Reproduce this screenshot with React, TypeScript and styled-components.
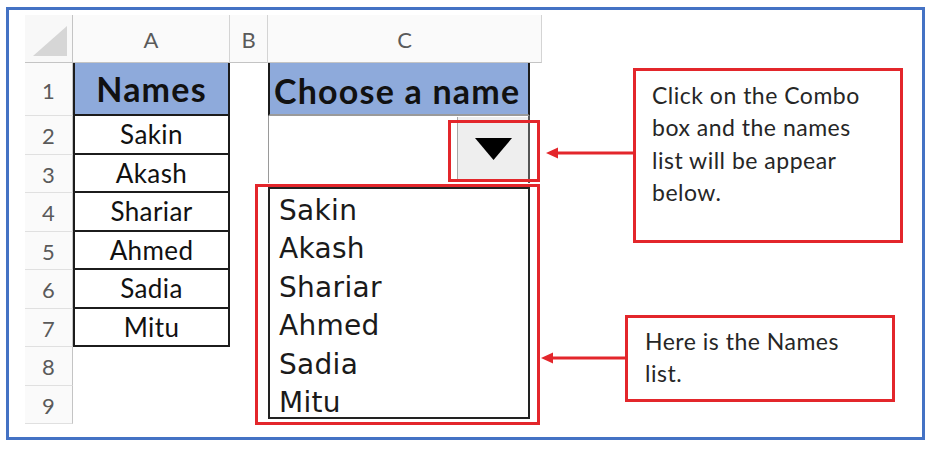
import React from 'react'
import styled, {createGlobalStyle} from 'styled-components'

const RED = '#e3262b'
const INK = '#1c1c1c'

const names = ['Sakin', 'Akash', 'Shariar', 'Ahmed', 'Sadia', 'Mitu']
const rowNumbers = [1, 2, 3, 4, 5, 6, 7, 8, 9]

const GlobalStyle = createGlobalStyle`
  body {
    margin: 0;
    background: #ffffff;
    font-family: Lato, 'Liberation Sans', sans-serif;
  }
`

type ArrowProps = {
  width: number
  top: number
}

// red callout arrow, tip on the left
const Arrow: React.FC<ArrowProps> = ({width, top}) => (
  <ArrowSvg width={width} height={14} viewBox={`0 0 ${width} 14`} style={{top}}>
    <line x1={9} y1={7} x2={width} y2={7} stroke={RED} strokeWidth={3} />
    <polygon points="0,7 12,1.5 12,12.5" fill={RED} />
  </ArrowSvg>
)

const App: React.FC = () => {
  return (
    <>
      <GlobalStyle />
      <Frame>
        <Sheet>
          <Corner>
            <svg width="34" height="30" viewBox="0 0 34 30">
              <polygon points="0,30 34,0 34,30" fill="#d6d6d6" />
            </svg>
          </Corner>
          <ColHeader $col={2}>A</ColHeader>
          <ColHeader $col={3}>B</ColHeader>
          <ColHeader $col={4}>C</ColHeader>

          {rowNumbers.map((n) => (
            <RowHeader key={n} $row={n + 1}>
              {n}
            </RowHeader>
          ))}

          <NameCell $row={2} $head>
            Names
          </NameCell>
          {names.map((name, i) => (
            <NameCell key={name} $row={i + 3}>
              {name}
            </NameCell>
          ))}

          <ChooseCell>Choose a name</ChooseCell>

          <ComboColumn>
            <ComboField>
              <DropButton>
                <svg width="37" height="22" viewBox="0 0 37 22">
                  <polygon points="0,0 37,0 18.5,22" fill="#000" />
                </svg>
                <Highlight $top={3} $left={-10} $right={-12} $bottom={-2} />
              </DropButton>
            </ComboField>
            <ListBox>
              {names.map((name) => (
                <ListItem key={name}>{name}</ListItem>
              ))}
              <Highlight $top={-5} $left={-15} $right={-12} $bottom={-8} />
            </ListBox>
          </ComboColumn>
        </Sheet>

        <Notes>
          <Callout $indent={91} $gap={53} $height={175} $padTop={8} $padLeft={16}>
            <Arrow width={90} top={75} />
            Click on the Combo box and the names list will be appear below.
          </Callout>
          <Callout $indent={83} $gap={72} $height={87} $padTop={7} $padLeft={17}>
            <Arrow width={87} top={33} />
            Here is the Names list.
          </Callout>
        </Notes>
      </Frame>
    </>
  )
}
export default App

const Frame = styled.div`
  box-sizing: border-box;
  width: 919px;
  height: 433px;
  margin: 7px 0 0 6px;
  border: 3px solid #4472c4;
  display: flex;
  align-items: flex-start;
  padding: 5px 0 0 16px;
`

const Sheet = styled.div`
  display: grid;
  grid-template-columns: 48px 157px 38px 274px;
  grid-template-rows: 48px 53px repeat(8, 38.5px);
  flex-shrink: 0;
`

const Corner = styled.div`
  grid-column: 1;
  grid-row: 1;
  display: flex;
  align-items: flex-end;
  justify-content: flex-end;
  padding: 0 5px 6px 0;
  background: #f8f8f8;
  border-right: 1px solid #c4c4c4;
  border-bottom: 1px solid #c4c4c4;
`

const ColHeader = styled.div<{$col: number}>`
  grid-column: ${(p) => p.$col};
  grid-row: 1;
  display: flex;
  align-items: center;
  justify-content: center;
  padding-top: 2px;
  background: #fafafa;
  border-right: 1px solid #d4d4d4;
  border-bottom: 1px solid #c4c4c4;
  color: #5a5a5a;
  font-size: 22px;
`

const RowHeader = styled.div<{$row: number}>`
  grid-column: 1;
  grid-row: ${(p) => p.$row};
  display: flex;
  align-items: center;
  justify-content: center;
  padding-top: 2px;
  background: #fafafa;
  border-right: 1px solid #c4c4c4;
  border-bottom: 1px solid #e0e0e0;
  color: #5a5a5a;
  font-size: 22px;
`

const NameCell = styled.div<{$row: number; $head?: boolean}>`
  grid-column: 2;
  grid-row: ${(p) => p.$row};
  display: flex;
  align-items: center;
  justify-content: center;
  border: 2px solid ${INK};
  border-top: none;
  background: ${(p) => (p.$head ? '#8eaadb' : '#ffffff')};
  color: #111;
  font-size: ${(p) => (p.$head ? '34px' : '26px')};
  font-weight: ${(p) => (p.$head ? 700 : 400)};
  letter-spacing: ${(p) => (p.$head ? '1.2px' : '0.4px')};
`

const ChooseCell = styled.div`
  grid-column: 4;
  grid-row: 2;
  width: 262px;
  box-sizing: border-box;
  display: flex;
  align-items: center;
  padding: 3px 0 0 4px;
  background: #8eaadb;
  border-left: 2px solid ${INK};
  border-right: 2px solid ${INK};
  border-bottom: 2px solid #9a9a9a;
  color: #111;
  font-size: 34px;
  font-weight: 700;
  letter-spacing: 1.2px;
  white-space: nowrap;
  overflow: hidden;
`

const ComboColumn = styled.div`
  grid-column: 4;
  grid-row: 3 / span 8;
  display: flex;
  flex-direction: column;
`

const ComboField = styled.div`
  box-sizing: border-box;
  width: 262px;
  height: 67px;
  display: flex;
  justify-content: flex-end;
  padding: 1px 0 3px;
  border-left: 1px solid #9a9a9a;
  border-right: 2px solid #555;
  background: #fff;
`

const DropButton = styled.div`
  position: relative;
  width: 70px;
  display: flex;
  align-items: center;
  justify-content: center;
  background: #eeeeee;
  border-left: 1px solid #a8a8a8;
`

const ListBox = styled.div`
  position: relative;
  box-sizing: border-box;
  width: 262px;
  height: 232px;
  margin-top: 4px;
  padding: 3px 0 0 9px;
  border: 2px solid #222;
  background: #fff;
  font-family: 'DejaVu Sans', Verdana, sans-serif;
  font-size: 28px;
  letter-spacing: 0.3px;
  color: #1a1a1a;
`

const ListItem = styled.div`
  line-height: 38.4px;
`

const Highlight = styled.div<{$top: number; $left: number; $right: number; $bottom: number}>`
  position: absolute;
  top: ${(p) => p.$top}px;
  left: ${(p) => p.$left}px;
  right: ${(p) => p.$right}px;
  bottom: ${(p) => p.$bottom}px;
  border: 3px solid ${RED};
  pointer-events: none;
`

const Notes = styled.div`
  display: flex;
  flex-direction: column;
`

const Callout = styled.div<{
  $indent: number
  $gap: number
  $height: number
  $padTop: number
  $padLeft: number
}>`
  position: relative;
  box-sizing: border-box;
  width: 270px;
  height: ${(p) => p.$height}px;
  margin: ${(p) => p.$gap}px 0 0 ${(p) => p.$indent}px;
  padding: ${(p) => p.$padTop}px 14px 0 ${(p) => p.$padLeft}px;
  border: 3px solid ${RED};
  color: #262626;
  font-size: 23px;
  letter-spacing: 0.5px;
  line-height: 32.4px;
`

const ArrowSvg = styled.svg`
  position: absolute;
  right: 100%;
  display: block;
`
